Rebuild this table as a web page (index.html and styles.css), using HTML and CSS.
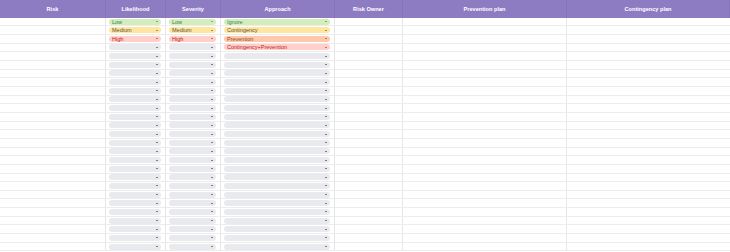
FILE: index.html
```html
<!DOCTYPE html>
<html lang="en">
<head>
    <meta charset="UTF-8">
    <title>Risk register</title>
    <link rel="stylesheet" href="styles.css">
</head>
<body>
    <div class="sheet" id="sheet">
        <div class="row head">
            <div class="cell">Risk</div>
            <div class="cell">Likelihood</div>
            <div class="cell">Severity</div>
            <div class="cell">Approach</div>
            <div class="cell">Risk Owner</div>
            <div class="cell">Prevention plan</div>
            <div class="cell">Contingency plan</div>
        </div>
    </div>

    <script>
        // first rows hold the option samples, the rest are empty dropdowns
        const samples = [
            [['green', 'Low'], ['green', 'Low'], ['green', 'Ignore']],
            [['yellow', 'Medium'], ['yellow', 'Medium'], ['yellow', 'Contingency']],
            [['red', 'High'], ['red', 'High'], ['orange', 'Prevention']],
            [['', ''], ['', ''], ['red', 'Contingency+Prevention']]
        ];

        function chip(opt) {
            const cls = opt[0] ? 'chip ' + opt[0] : 'chip';
            return '<div class="cell"><span class="' + cls + '"><span class="label">' + opt[1] + '</span><i class="arrow"></i></span></div>';
        }

        const sheet = document.getElementById('sheet');
        for (let r = 0; r < 27; r++) {
            const s = samples[r] || [['', ''], ['', ''], ['', '']];
            sheet.insertAdjacentHTML('beforeend',
                '<div class="row">' +
                '<div class="cell"></div>' +
                chip(s[0]) + chip(s[1]) + chip(s[2]) +
                '<div class="cell"></div><div class="cell"></div><div class="cell"></div>' +
                '</div>');
        }
    </script>
</body>
</html>
```

FILE: styles.css
```css
* {
    margin: 0;
    padding: 0;
    box-sizing: border-box;
}

body {
    background: #fff;
    font-family: 'Liberation Sans', Arial, sans-serif;
    overflow: hidden;
}

.sheet {
    width: 730px;
}

.row {
    display: grid;
    grid-template-columns: 106px 60px 55px 114px 68px 164px 163px;
    height: 8.667px;
    border-bottom: 1px solid #ececec;
}

.row .cell {
    display: flex;
    align-items: center;
    border-right: 1px solid #e6e6e6;
    min-width: 0;
}

.row .cell:last-child {
    border-right: none;
}

.row.head {
    height: 17.7px;
    background: #8e7cc3;
    border-bottom: none;
}

.row.head .cell {
    justify-content: center;
    color: #fff;
    font-weight: bold;
    font-size: 5.6px;
    border-right: 1px solid #8574bb;
}

.chip {
    flex: 1;
    display: flex;
    align-items: center;
    justify-content: space-between;
    height: 6px;
    margin: 0 4px 0 3px;
    padding: 0 3px;
    border-radius: 3px;
    background: #e8eaed;
    color: #1f1f1f;
    font-size: 5.5px;
    line-height: 6px;
}

.chip .label {
    white-space: nowrap;
    opacity: 0.85;
}

.chip .arrow {
    width: 0;
    height: 0;
    border-left: 1.6px solid transparent;
    border-right: 1.6px solid transparent;
    border-top: 1.8px solid #111;
}

.chip.green {
    background: #d4edbc;
    color: #11734b;
}

.chip.green .arrow {
    border-top-color: #11734b;
}

.chip.yellow {
    background: #ffe5a0;
    color: #473821;
}

.chip.yellow .arrow {
    border-top-color: #473821;
}

.chip.orange {
    background: #ffc8aa;
    color: #753800;
}

.chip.orange .arrow {
    border-top-color: #753800;
}

.chip.red {
    background: #ffcfc9;
    color: #b10202;
}

.chip.red .arrow {
    border-top-color: #b10202;
}
```
